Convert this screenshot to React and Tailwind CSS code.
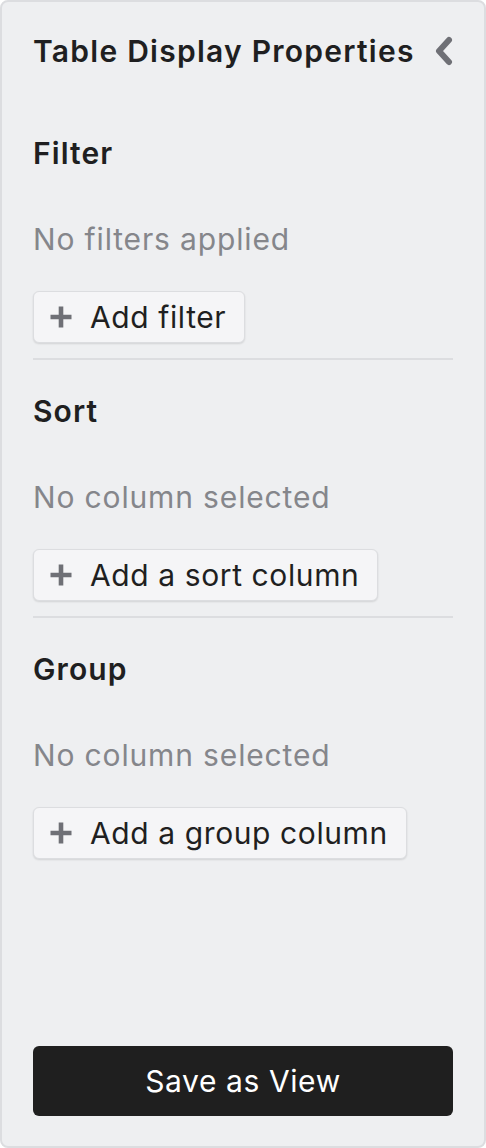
import React from 'react';

const PlusIcon = () => (
  <svg width="24" height="24" viewBox="0 0 24 24" className="shrink-0">
    <path d="M12 1.5v21M1.5 12h21" stroke="#6f7076" strokeWidth="4.6" strokeLinecap="butt" />
  </svg>
);

const AddButton = ({ label }) => (
  <button
    type="button"
    className="self-start flex items-center h-[52px] pl-[15px] pr-[18px] gap-[17px] bg-[#f5f5f7] border border-[#dcdde0] rounded-[6px] shadow-[0_1px_2px_rgba(0,0,0,0.12)] text-[30px] tracking-[0.6px] leading-none text-[#1f1f21]"
  >
    <PlusIcon />
    <span>{label}</span>
  </button>
);

const Section = ({ title, empty, action, divider }) => (
  <div className="flex flex-col">
    <h2 className="text-[30px] leading-[34px] font-semibold tracking-[1.1px] text-[#1f1f21]">{title}</h2>
    <p className="mt-[52px] text-[30px] leading-[34px] tracking-[0.85px] text-[#85868b]">{empty}</p>
    <div className="mt-[35px] flex">
      <AddButton label={action} />
    </div>
    {divider && <div className="mt-[15px] h-[2px] bg-[#dcdde0]" />}
  </div>
);

export default function App() {
  return (
    <div
      className="w-[486px] h-[1148px] bg-[#eeeff1] border-2 border-[#dcdde0] rounded-[8px] px-[31px] pt-[32px] pb-[30px] flex flex-col"
      style={{ fontFamily: 'Inter, "Noto Sans", sans-serif' }}
    >
      <div className="flex items-center justify-between h-[34px]">
        <h1 className="text-[30px] leading-[34px] font-semibold tracking-[1.25px] text-[#1f1f21] whitespace-nowrap">
          Table Display Properties
        </h1>
        <svg width="22" height="30" viewBox="0 0 22 30" className="mr-[-2px] shrink-0">
          <path d="M16 4L6 15l10 11" fill="none" stroke="#6f7076" strokeWidth="6" strokeLinecap="round" strokeLinejoin="round" />
        </svg>
      </div>

      <div className="mt-[68px] flex flex-col gap-[34px]">
        <Section title="Filter" empty="No filters applied" action="Add filter" divider />
        <Section title="Sort" empty="No column selected" action="Add a sort column" divider />
        <Section title="Group" empty="No column selected" action="Add a group column" />
      </div>

      <button
        type="button"
        className="mt-auto h-[70px] w-full bg-[#1f1f1f] rounded-[6px] text-white text-[30px] tracking-[0.6px] leading-none"
      >
        Save as View
      </button>
    </div>
  );
}
